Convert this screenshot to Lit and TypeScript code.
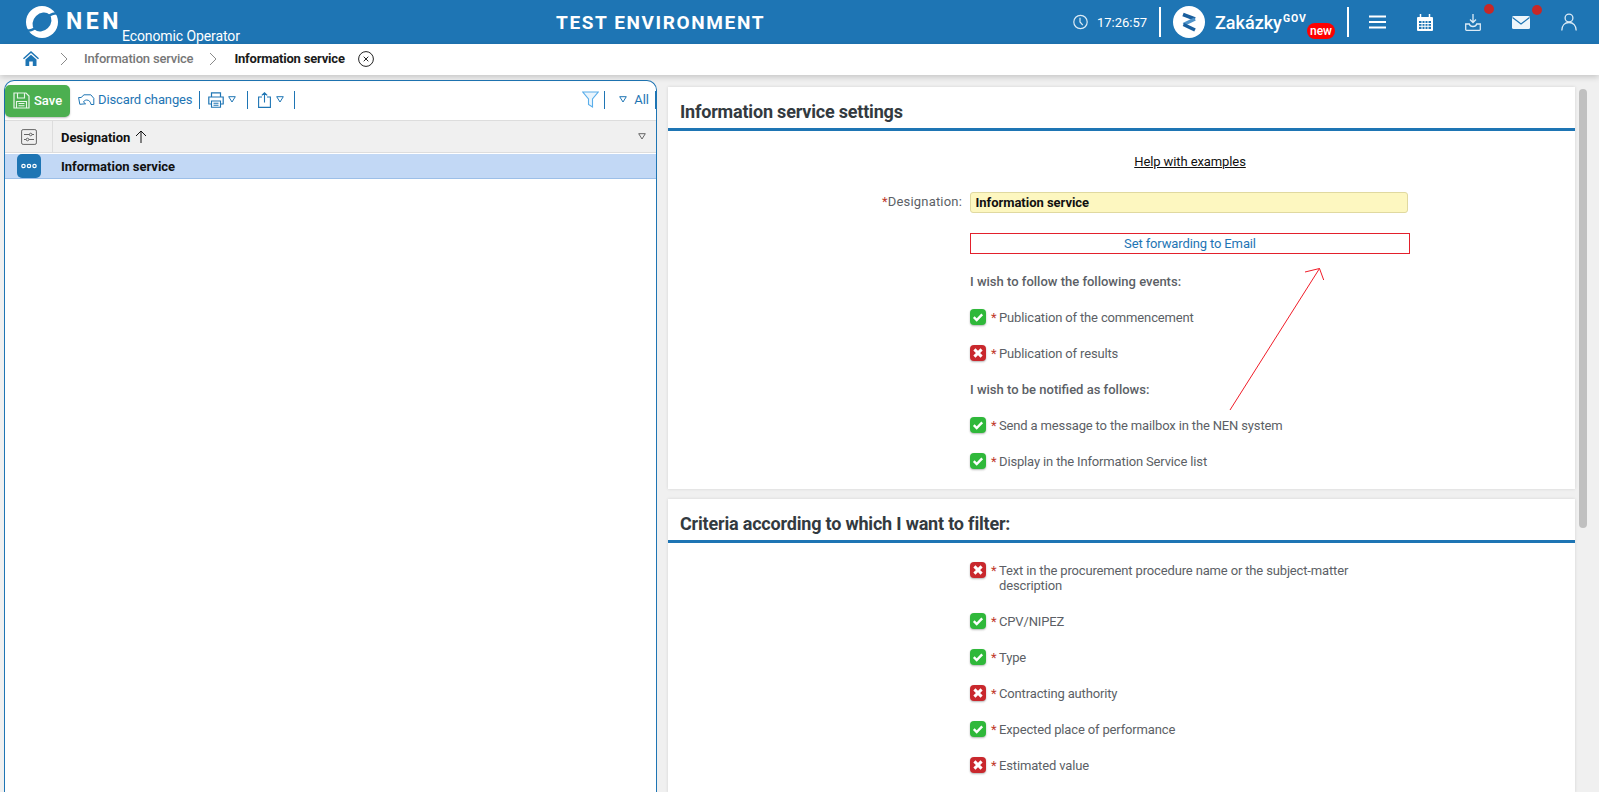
import { LitElement, html, css, svg } from "lit";
import { customElement } from "lit/decorators.js";

const tick = svg`<path d="M3.800 8.200l2.900 2.900L12.200 5.400" fill="none" stroke="#fff" stroke-width="2.400"/>`;
const cross = svg`<path d="M4.400 4.400l7.200 7.200M11.600 4.400l-7.200 7.200" fill="none" stroke="#fff" stroke-width="3"/>`;
const tri = (c: string) => html`<svg class="tri" width="8" height="7" viewBox="0 0 8 7"><path d="M.7.7h6.600L4 6z" fill="none" stroke="${c}" stroke-width="1"/></svg>`;
const chev = html`<svg class="chev" width="8" height="14" viewBox="0 0 8 14"><path d="M1 1l6 6-6 6" fill="none" stroke="#8a8a8a" stroke-width="1"/></svg>`;

function row(ok: boolean, text: string) {
  return html`<div class="row">
    <span class="st ${ok ? "ok" : "no"}"><svg width="16" height="16" viewBox="0 0 16 16">${ok ? tick : cross}</svg></span>
    <span class="star">*</span><span class="rt">${text}</span>
  </div>`;
}

@customElement("app-root")
export class AppRoot extends LitElement {
  static styles = css`
    :host { display: block; width: 1599px; height: 792px; overflow: hidden; position: relative; background: #f0f0f0; font-family: Roboto, "Liberation Sans", sans-serif; font-size: 13px; color: #5c5f66; }
    svg { display: block; flex: none; }
    .top { height: 44px; background: #1e75b4; color: #fff; display: flex; align-items: center; position: relative; }
    .logo { margin-left: 26px; }
    .nen { font-weight: 700; font-size: 23px; letter-spacing: 3.500px; margin-left: 8px; margin-top: -1px; width: 56px; line-height: 26px; }
    .eo { font-size: 14px; letter-spacing: -.1px; align-self: flex-end; line-height: 16px; }
    .env { position: absolute; left: 556px; width: 212px; text-align: left; font-weight: 700; font-size: 19px; letter-spacing: 1.620px; white-space: nowrap; }
    .tright { margin-left: auto; display: flex; align-items: center; height: 44px; }
    .clock { margin-right: 9px; }
    .time { font-size: 13px; width: 50px; }
    .vsep { width: 2px; height: 30px; background: #fff; margin: 0 12px; }
    .zk { font-size: 18px; font-weight: 500; margin-left: 10px; width: 68px; }
    .gov { font-size: 10.500px; font-weight: 700; align-self: flex-start; margin-top: 12px; width: 24px; letter-spacing: .9px; }
    .new { background: #f00; border-radius: 8px; width: 28px; height: 16px; line-height: 16px; text-align: center; font-size: 12px; font-weight: 500; align-self: flex-start; margin-top: 23px; }
    .ic { position: relative; display: block; }
    .dot { position: absolute; width: 10px; height: 10px; border-radius: 50%; background: #c62828; }
    .crumb { height: 31px; background: #fff; display: flex; align-items: center; box-shadow: 0 2px 6px rgba(0,0,0,.18); position: relative; z-index: 1; font-weight: 500; padding-bottom: 2px; box-sizing: border-box; letter-spacing: -.2px; }
    .crumb .home { margin-left: 23px; }
    .c1 { color: #777; }
    .c2 { color: #1a1a1a; font-weight: 700; }
    .main { display: flex; height: 717px; }
    .left { margin: 5px 0 0 4px; width: 653px; box-sizing: border-box; border: 1px solid #1e75b4; border-bottom: 0; border-radius: 10px 10px 0 0; background: #fff; height: 720px; flex: none; }
    .tb { height: 39px; box-sizing: border-box; padding-bottom: 2px; display: flex; align-items: center; color: #1e75b4; }
    .save { width: 65px; height: 32px; box-sizing: border-box; background: #4caf50; border-radius: 5px; color: #fff; display: flex; align-items: center; padding-left: 8px; gap: 4px; font-weight: 500; box-shadow: 0 1px 2px rgba(0,0,0,.25); margin-top: 2px; }
    .disc { margin-left: 8px; }
    .dt { margin-left: 3px; letter-spacing: -.12px; }
    .sep { width: 1px; height: 18px; background: #1e75b4; }
    .sp { flex: 1; }
    .hd { height: 33px; box-sizing: border-box; background: #f0f0f0; border-top: 1px solid #ddd; border-bottom: 1px solid #ddd; display: flex; align-items: center; color: #111; font-weight: 700; }
    .hd .c0 { width: 47px; height: 100%; border-right: 1px solid #ddd; display: flex; align-items: center; justify-content: center; flex: none; }
    .hd .dn { margin: 1px 0 0 8px; letter-spacing: -.05px; }
    .rowsel { height: 25px; box-sizing: border-box; background: #c2d8f5; border-bottom: 1px solid #9cbfe8; display: flex; align-items: flex-start; color: #111; font-weight: 700; margin-top: 1px; }
    .more { width: 24px; height: 24px; background: #1e75b4; border-radius: 5px; margin-left: 12px; display: flex; align-items: center; justify-content: center; flex: none; }
    .rowsel span.t { margin-left: 20px; line-height: 25px; }
    .right { margin: 12px 0 0 11px; width: 907px; flex: none; display: flex; flex-direction: column; gap: 10px; }
    .card { background: #fff; box-shadow: 0 0 3px rgba(0,0,0,.12); }
    h2 { margin: 0; height: 44px; box-sizing: border-box; border-bottom: 3px solid #1e75b4; padding: 14px 0 0 12px; font-size: 18px; letter-spacing: -.19px; line-height: 22px; font-weight: 700; color: #333a40; }
    .body { padding: 0 0 9px 302px; }
    .pad { padding-top: 10px; }
    .help { margin: 23px 0 0 -302px; text-align: center; color: #111; text-decoration: underline; line-height: 16px; padding-left: 137px; letter-spacing: -.1px; }
    .desig { display: flex; margin-top: 22px; position: relative; }
    .lab { position: absolute; right: 100%; margin-right: 8px; top: 0; line-height: 19px; white-space: nowrap; letter-spacing: .18px; }
    .lab .star { margin-right: 0; }
    .star { color: #c0392b; margin-right: 1px; width: 7px; flex: none; }
    .inp { width: 438px; height: 21px; box-sizing: border-box; background: #fdf7c0; border: 1px solid #e0d9a0; border-radius: 3px; padding-left: 4.500px; line-height: 19px; color: #111; font-weight: 700; letter-spacing: -.03px; }
    .fw { margin-top: 20px; width: 440px; height: 21px; box-sizing: border-box; border: 1px solid #e3202c; text-align: center; color: #1e75b4; line-height: 19px; letter-spacing: -.13px; }
    .sub { margin-top: 10px; height: 36px; line-height: 36px; font-weight: 500; }
    .row + .sub { margin-top: 0; }
    .row { display: flex; align-items: flex-start; padding: 10px 0 11px; line-height: 15px; }
    .st { width: 16px; height: 16px; border-radius: 4px; flex: none; margin-right: 5px; margin-top: -1px; box-shadow: 0 1px 2px rgba(0,0,0,.3); }
    .ok { background: #2fb83a; }
    .no { background: #c9282d; }
    .rt { width: 385px; letter-spacing: -.15px; }
    .track { margin: 14px 0 0 4px; width: 8px; height: 439px; border-radius: 4px; background: #c0c0c0; flex: none; }
    .arrow { position: absolute; left: 1220px; top: 260px; }
  `;

  render() {
    return html`
      <div class="top">
        <svg class="logo" width="32" height="32" viewBox="0 0 32 32">
          <circle cx="16" cy="16" r="16" fill="#fff"/>
          <ellipse cx="16" cy="16" rx="10.500" ry="8.400" transform="rotate(-45 16 16)" fill="#1e75b4"/>
          <path d="M22 9C25 7 28 6 33 6L31 8.500C27.500 8.800 25.500 9.500 23.500 11z" fill="#1e75b4"/>
          <path d="M10 23C7 25 4 26 -1 26L1 23.500C4.500 23.200 6.500 22.500 8.500 21z" fill="#1e75b4"/>
        </svg>
        <span class="nen">NEN</span><span class="eo">Economic Operator</span>
        <div class="env">TEST ENVIRONMENT</div>
        <div class="tright">
          <svg class="clock" width="15" height="16" viewBox="0 0 15 16"><circle cx="7.500" cy="8" r="6.700" fill="none" stroke="#dcebf6" stroke-width="1.200"/><path d="M7 3.800V8l2.800 3.200" fill="none" stroke="#dcebf6" stroke-width="1.200"/></svg>
          <span class="time">17:26:57</span>
          <span class="vsep"></span>
          <svg width="32" height="32" viewBox="0 0 32 32"><circle cx="16" cy="16" r="16" fill="#fff"/><path d="M10 8.500L22 13" stroke="#1a5f9e" stroke-width="3.600" fill="none"/><path d="M22 13L10.500 18.500" stroke="#4f93c9" stroke-width="3.600" fill="none"/><path d="M10.500 18.500L22 24" stroke="#1a5f9e" stroke-width="3.600" fill="none"/></svg>
          <span class="zk">Zakázky</span><span class="gov">GOV</span><span class="new">new</span>
          <span class="vsep" style="margin-left:12px;margin-right:20px"></span>
          <svg width="17" height="14" viewBox="0 0 17 14" style="margin-right:31px"><path d="M0 1.500h17M0 7h17M0 12.500h17" stroke="#fff" stroke-width="2"/></svg>
          <svg width="16" height="17" viewBox="0 0 16 17" style="margin-right:32px"><path d="M1 3h14a1 1 0 0 1 1 1v12a1 1 0 0 1-1 1H1a1 1 0 0 1-1-1V4a1 1 0 0 1 1-1z" fill="#fff"/><path d="M3.500 0v4M12.500 0v4" stroke="#fff" stroke-width="1.500"/><path d="M2 7h12v8H2z" fill="#1e75b4"/><path d="M2 9.500h12M2 12.300h12M5 7v8M8 7v8M11 7v8" stroke="#fff" stroke-width="1"/></svg>
          <span class="ic" style="margin-right:31px">
            <svg width="16" height="17" viewBox="0 0 16 17"><path d="M8 0v8M5 5.500L8 8.500l3-3" fill="none" stroke="#dcebf6" stroke-width="1.300"/><path d="M.7 10h3.600c.5 2 2 2.500 3.700 2.500s3.200-.5 3.700-2.500h3.600v5.500a.8.8 0 0 1-.8.8H1.500a.8.8 0 0 1-.8-.8z" fill="none" stroke="#dcebf6" stroke-width="1.300"/></svg>
            <i class="dot" style="left:19px;top:-10px"></i>
          </span>
          <span class="ic" style="margin-right:31px">
            <svg width="18" height="13" viewBox="0 0 18 13"><rect width="18" height="13" rx="1.500" fill="#eef6fb"/><path d="M.5 1.500L9 8l8.500-6.500" fill="none" stroke="#1e75b4" stroke-width="1.200"/></svg>
            <i class="dot" style="left:20px;top:-11px"></i>
          </span>
          <svg width="16" height="18" viewBox="0 0 16 18" style="margin-right:22px"><circle cx="8" cy="5" r="3.900" fill="none" stroke="#dcebf6" stroke-width="1.300"/><path d="M.8 17.500c0-5 3-8 7.200-8s7.200 3 7.200 8" fill="none" stroke="#dcebf6" stroke-width="1.300"/></svg>
        </div>
      </div>
      <div class="crumb">
        <svg class="home" width="16" height="15" viewBox="0 0 16 15"><path d="M8 0L0 7.200l1 1.100L8 2.100l7 6.200 1-1.100z" fill="#1e75b4"/><path d="M2.500 8.500L8 3.700l5.500 4.800V15H9.800v-4.500H6.200V15H2.500z" fill="#1e75b4"/></svg>
        <span style="margin-left:21px">${chev}</span>
        <span class="c1" style="margin-left:16px">Information service</span>
        <span style="margin-left:16px">${chev}</span>
        <span class="c2" style="margin-left:17px">Information service</span>
        <svg style="margin-left:13px" width="16" height="16" viewBox="0 0 16 16"><circle cx="8" cy="8" r="7.400" fill="none" stroke="#222" stroke-width="1"/><path d="M5.700 5.700l4.600 4.600M10.300 5.700l-4.600 4.600" stroke="#222" stroke-width="1"/></svg>
      </div>
      <div class="main">
        <div class="left">
          <div class="tb">
            <div class="save">
              <svg width="17" height="17" viewBox="0 0 17 17"><path d="M1 1h12l3 3v12H1z" fill="none" stroke="#e8f5e9" stroke-width="1.200"/><path d="M4.500 1v5h7V1M3.500 16V9.500h10V16M5.500 11.500h6M5.500 13.700h6" fill="none" stroke="#e8f5e9" stroke-width="1.100"/></svg>
              Save
            </div>
            <svg class="disc" width="17" height="11" viewBox="0 0 17 11"><path d="M.6 3.500h2.500L6 .8h6.800l3 3.500V10.500H13C12.500 7.800 11 6 8.700 6 7 6 6 7 5.400 8L7.600 9.800 1.800 10.300z" fill="none" stroke="#1e75b4" stroke-width="1"/></svg>
            <span class="dt">Discard changes</span>
            <span class="sep" style="margin-left:7px"></span>
            <svg style="margin-left:8px" width="16" height="16" viewBox="0 0 16 16"><path d="M3.500 5V.8h9V5M3.500 12H.8V5h14.400v7H12.500" fill="none" stroke="#1e75b4" stroke-width="1.200"/><path d="M3.500 9h9v6.300h-9zM5.500 11.200h5M5.500 13.200h5" fill="none" stroke="#1e75b4" stroke-width="1.100"/></svg>
            <span style="margin-left:4px">${tri("#1e75b4")}</span>
            <span class="sep" style="margin-left:11px"></span>
            <svg style="margin-left:10px" width="13" height="16" viewBox="0 0 13 16"><path d="M4 5H.6v10.400h11.800V5H9M6.500 10.500V.8M3.800 3.400L6.500.8l2.700 2.600" fill="none" stroke="#1e75b4" stroke-width="1.100"/></svg>
            <span style="margin-left:5px">${tri("#1e75b4")}</span>
            <span class="sep" style="margin-left:10px"></span>
            <span class="sp"></span>
            <svg width="17" height="17" viewBox="0 0 17 17"><path d="M.8 1h15.400l-5.700 7v8l-4-2.500V8z" fill="#eaf5fd" stroke="#5aaeea" stroke-width="1.100"/></svg>
            <span class="sep" style="margin-left:5px"></span>
            <span style="margin-left:14px">${tri("#1e75b4")}</span>
            <span style="margin-left:7px">All</span>
            <span class="sep" style="margin-left:6px;width:2px;margin-right:-1px"></span>
          </div>
          <div class="hd">
            <div class="c0"><svg width="16" height="16" viewBox="0 0 16 16"><rect x=".6" y=".6" width="14.800" height="14.800" rx="1.500" fill="none" stroke="#666" stroke-width="1"/><path d="M3 5.500h5.500M11 5.500h2M3 10.500h2M8 10.500h5" stroke="#666" stroke-width="1"/><circle cx="9.700" cy="5.500" r="1.300" fill="none" stroke="#666"/><circle cx="6.500" cy="10.500" r="1.300" fill="none" stroke="#666"/></svg></div>
            <span class="dn">Designation</span>
            <svg style="margin-left:5px" width="12" height="13" viewBox="0 0 12 13"><path d="M6 13V1M1 6l5-5 5 5" fill="none" stroke="#111" stroke-width="1"/></svg>
            <span class="sp"></span>
            <span style="margin-right:10px">${tri("#666")}</span>
          </div>
          <div class="rowsel">
            <div class="more"><svg width="16" height="6" viewBox="0 0 16 6"><circle cx="2.500" cy="3" r="1.700" fill="none" stroke="#fff" stroke-width="1.200"/><circle cx="8" cy="3" r="1.700" fill="none" stroke="#fff" stroke-width="1.200"/><circle cx="13.500" cy="3" r="1.700" fill="none" stroke="#fff" stroke-width="1.200"/></svg></div>
            <span class="t">Information service</span>
          </div>
        </div>
        <div class="right">
          <div class="card">
            <h2>Information service settings</h2>
            <div class="body">
              <div class="help">Help with examples</div>
              <div class="desig">
                <span class="lab"><span class="star">*</span>Designation:</span>
                <div class="inp">Information service</div>
              </div>
              <div class="fw">Set forwarding to Email</div>
              <div class="sub">I wish to follow the following events:</div>
              ${row(true, "Publication of the commencement")}
              ${row(false, "Publication of results")}
              <div class="sub">I wish to be notified as follows:</div>
              ${row(true, "Send a message to the mailbox in the NEN system")}
              ${row(true, "Display in the Information Service list")}
            </div>
          </div>
          <div class="card" style="flex:1">
            <h2>Criteria according to which I want to filter:</h2>
            <div class="body pad">
              ${row(false, "Text in the procurement procedure name or the subject-matter description")}
              ${row(true, "CPV/NIPEZ")}
              ${row(true, "Type")}
              ${row(false, "Contracting authority")}
              ${row(true, "Expected place of performance")}
              ${row(false, "Estimated value")}
            </div>
          </div>
        </div>
        <div class="track"></div>
      </div>
      <svg class="arrow" width="110" height="160" viewBox="1220 260 110 160"><path d="M1230 410L1319.500 268.500M1305 272l14.500-3.500 4.200 11.500" fill="none" stroke="#f01c28" stroke-width="1"/></svg>
    `;
  }
}
